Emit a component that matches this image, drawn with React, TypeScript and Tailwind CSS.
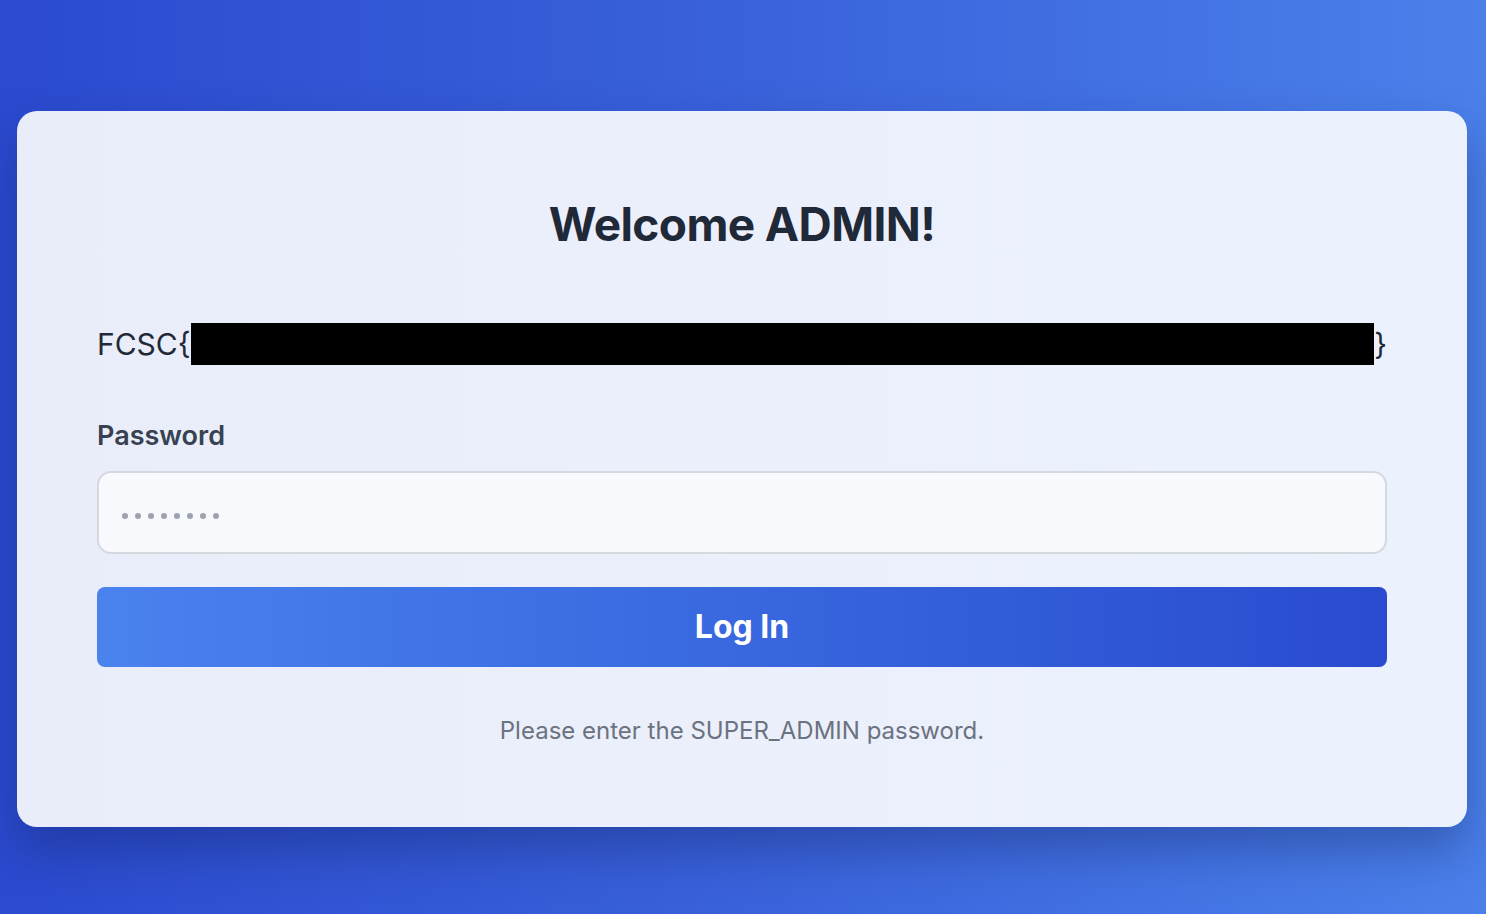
export default function App() {
  return (
    <div className="min-h-[914px] w-full bg-gradient-to-r from-[#2b4acf] via-[#3a62db] to-[#4b80ea] pl-[17px] pr-[19px] pt-[111px] pb-[87px] font-['Inter','Liberation_Sans',sans-serif]">
      {/* Card */}
      <div className="rounded-[20px] bg-gradient-to-r from-[#e9edf9] to-[#ecf2fd] px-[80px] pt-[84px] pb-[81px] shadow-[0_24px_48px_rgba(15,30,90,0.35)]">
        <h1 className="text-center text-[46px] font-bold leading-[58px] tracking-[-0.6px] text-[#1f2937]">
          Welcome ADMIN!
        </h1>

        {/* Flag (redacted) */}
        <div className="mt-[70px] flex h-[42px] items-center text-[30px] leading-[42px] text-[#1f2937]">
          <span>FCSC&#123;</span>
          <div className="h-[42px] flex-1 bg-black" />
          <span>&#125;</span>
        </div>

        <label className="mt-[55px] block text-[27px] font-semibold leading-[32px] text-[#374151]">
          Password
        </label>

        {/* Input */}
        <div className="mt-[19px] flex h-[83px] items-center gap-[7px] rounded-[14px] border-2 border-[#d4d8df] bg-[#f8f9fc] pl-[23px] pt-[6px]">
          {[0, 1, 2, 3, 4, 5, 6, 7].map((i) => (
            <span key={i} className="h-[6px] w-[6px] rounded-full bg-[#9ca3af]" />
          ))}
        </div>

        <button className="mt-[33px] flex h-[80px] w-full items-center justify-center rounded-[8px] bg-gradient-to-r from-[#4a82ee] to-[#2a4bcf] text-[32px] font-bold text-white">
          Log In
        </button>

        <p className="mt-[49px] text-center text-[24px] leading-[30px] text-[#6b7280]">
          Please enter the SUPER_ADMIN password.
        </p>
      </div>
    </div>
  )
}
